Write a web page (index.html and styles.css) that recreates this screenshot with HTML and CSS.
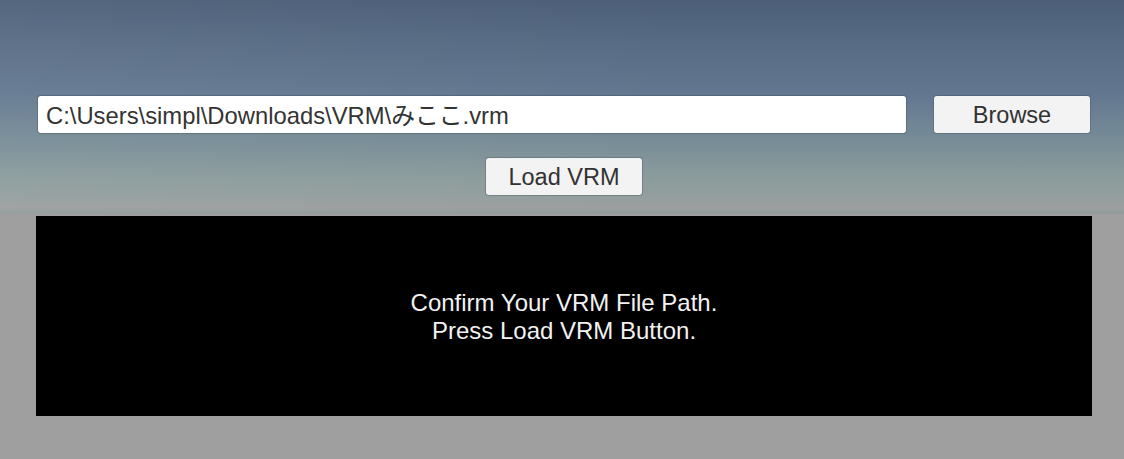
FILE: index.html
```html
<!DOCTYPE html>
<html>
<head>
<meta charset="utf-8">
<link rel="stylesheet" href="styles.css">
</head>
<body>
<div class="sky">
  <div class="path-row">
    <div class="path-input">C:\Users\simpl\Downloads\VRM\みここ.vrm</div>
    <div class="btn browse">Browse</div>
  </div>
  <div class="load-row">
    <div class="btn load">Load VRM</div>
  </div>
</div>
<div class="panel">
  <div class="message">Confirm Your VRM File Path.<br>Press Load VRM Button.</div>
</div>
</body>
</html>
```
FILE: styles.css
```css
html, body {
  margin: 0;
  padding: 0;
}
body {
  width: 1124px;
  height: 459px;
  background: #9f9f9f;
  font-family: "Liberation Sans", Arial, "Noto Sans CJK JP", sans-serif;
  overflow: hidden;
}
.sky {
  height: 214px;
  box-sizing: border-box;
  padding: 96px 34px 0 38px;
  background:
    linear-gradient(100deg, rgba(255,255,255,0.05) 0%, rgba(255,255,255,0) 60%),
    linear-gradient(180deg, #4c5e78 0%, #566a83 40px, #637890 95px, #778c97 140px, #8a9b9c 175px, #939e9e 195px, #9b9f9f 208px, #8f9a9a 214px);
}
.path-row {
  display: flex;
  gap: 28px;
  height: 37px;
}
.path-input {
  flex: 1;
  box-sizing: border-box;
  background: #ffffff;
  border-radius: 3px;
  box-shadow: 0 0 0 1px rgba(60,70,80,0.35);
  color: #333333;
  font-size: 23.8px;
  line-height: 37px;
  padding: 1px 0 0 8px;
  white-space: nowrap;
}
.btn {
  width: 156px;
  height: 37px;
  box-sizing: border-box;
  padding-top: 1px;
  background: #f3f3f3;
  border-radius: 3px;
  box-shadow: 0 0 0 1px rgba(60,70,80,0.3);
  color: #323232;
  font-size: 23.5px;
  line-height: 36px;
  text-align: center;
}
.load-row {
  display: flex;
  justify-content: center;
  margin-top: 25px;
}
.panel {
  margin: 2px 32px 0 36px;
  height: 200px;
  background: #000000;
  display: flex;
  align-items: center;
  justify-content: center;
}
.message {
  color: #f2f2f2;
  font-size: 24px;
  line-height: 28px;
  padding-top: 2px;
  text-align: center;
}
```
